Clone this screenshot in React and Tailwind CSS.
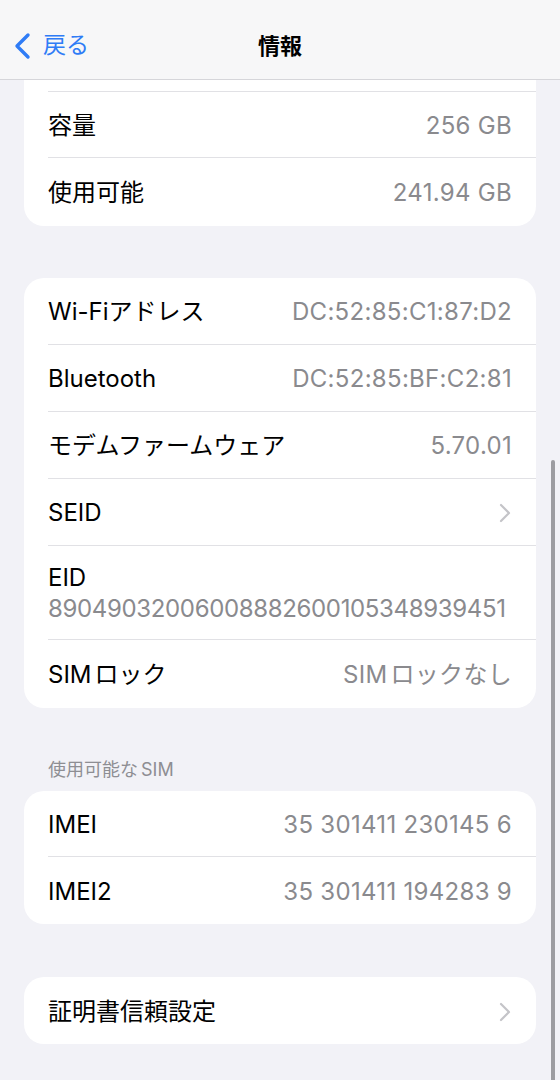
import React from "react";

const FONT = { fontFamily: '"Inter", "Noto Sans CJK JP", sans-serif' };

// 設定アプリの「情報」画面
function Row({ label, value, chevron, last, tall, h = "h-[67px]" }) {
  return (
    <div className="pl-6">
      <div
        className={
          "flex pr-6 " +
          (tall ? "h-[94px] flex-col justify-center items-start gap-[7px] pt-[2px] " : h + " items-center justify-between pt-[2px] ") +
          (last ? "" : "border-b border-[#e1e1e5]")
        }
      >
        <span className="text-[24px] text-black leading-none">{label}</span>
        {value && (
          <span
            className={
              "text-[24px] text-[#8a8a8e] leading-none " + (tall ? "tracking-[-0.35px]" : "tracking-[0.3px]")
            }
          >
            {value}
          </span>
        )}
        {chevron && (
          <svg width="12" height="20" viewBox="0 0 12 20" className="mr-[1px]">
            <path d="M2 2 L10 10 L2 18" fill="none" stroke="#c4c4c8" strokeWidth="2.2" strokeLinecap="round" strokeLinejoin="round" />
          </svg>
        )}
      </div>
    </div>
  );
}

function Card({ children, className = "" }) {
  return <div className={"mx-6 bg-white rounded-[20px] overflow-hidden " + className}>{children}</div>;
}

const Sim = ({ rest }) => (
  <>
    SIM<span className="ml-[3px]">{rest}</span>
  </>
);

export default function App() {
  return (
    <div className="relative h-[1080px] overflow-hidden bg-[#f2f2f7]" style={FONT}>
      {/* nav bar */}
      <header className="h-[80px] bg-[#f7f7f8] border-b border-[#d6d6da] flex items-center relative">
        <div className="flex items-center pl-[13px] gap-[12px] pt-[12px]">
          <svg width="18" height="28" viewBox="0 0 18 28">
            <path d="M15 3 L4 14 L15 25" fill="none" stroke="#2f7cf6" strokeWidth="3.4" strokeLinecap="round" strokeLinejoin="round" />
          </svg>
          <span className="text-[23px] text-[#2f7cf6] leading-none">戻る</span>
        </div>
        <h1 className="absolute left-0 right-0 text-center top-[35px] text-[22px] font-bold text-black leading-none">情報</h1>
      </header>

      {/* storage card (top cut off under the nav) */}
      <div className="mx-6 bg-white rounded-b-[20px] overflow-hidden">
        <div className="pl-6">
          <div className="h-[12px] border-b border-[#e1e1e5]"></div>
        </div>
        <Row label="容量" value="256 GB" h="h-[66px]" />
        <Row label="使用可能" value="241.94 GB" last h="h-[68px]" />
      </div>

      <Card className="mt-[52px]">
        <Row label="Wi-Fiアドレス" value="DC:52:85:C1:87:D2" />
        <Row label="Bluetooth" value="DC:52:85:BF:C2:81" />
        <Row label="モデムファームウェア" value="5.70.01" />
        <Row label="SEID" chevron />
        <Row label="EID" value="89049032006008882600105348939451" tall />
        <Row label={<Sim rest="ロック" />} value={<Sim rest="ロックなし" />} last h="h-[68px]" />
      </Card>

      <p className="mt-[53px] mb-[12px] pl-12 text-[18px] text-[#8e8e93] leading-none">
        使用可能な<span className="ml-[3px]">SIM</span>
      </p>

      <Card>
        <Row label="IMEI" value="35 301411 230145 6" h="h-[66px]" />
        <Row label="IMEI2" value="35 301411 194283 9" last />
      </Card>

      <Card className="mt-[53px]">
        <Row label="証明書信頼設定" chevron last />
      </Card>

      {/* scroll indicator */}
      <div className="absolute right-[5px] top-[460px] w-[4px] h-[640px] rounded-full bg-[#9c9ca1]"></div>
    </div>
  );
}
